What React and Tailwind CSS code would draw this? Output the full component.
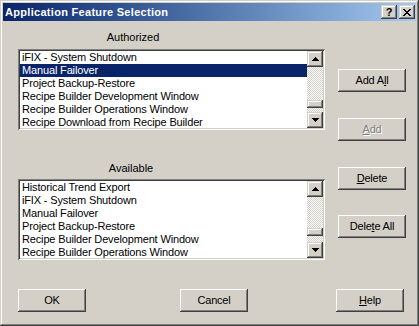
import React from "react";

const raised =
  "bg-[#d4d0c8] shadow-[inset_-1px_-1px_#404040,inset_1px_1px_#ffffff,inset_-2px_-2px_#808080,inset_2px_2px_#d4d0c8]";
const raisedSb =
  "bg-[#d4d0c8] shadow-[inset_-1px_-1px_#404040,inset_1px_1px_#d4d0c8,inset_-2px_-2px_#808080,inset_2px_2px_#ffffff]";

function Btn({ children, className = "", disabled }) {
  return (
    <div
      className={
        "w-[68px] h-[23px] flex items-center justify-center text-[11px] leading-[13px] tracking-[-0.2px] " +
        raised +
        " " +
        (disabled ? "text-[#808080] [text-shadow:1px_1px_0_#ffffff]" : "text-black") +
        " " +
        className
      }
    >
      <span>{children}</span>
    </div>
  );
}

function Arrow({ up }) {
  return (
    <svg width="7" height="4" viewBox="0 0 7 4" shapeRendering="crispEdges">
      {up ? (
        <path d="M3 0h1v1h1v1h1v1h1v1H0V3h1V2h1V1h1z" fill="#000" />
      ) : (
        <path d="M0 0h7v1H6v1H5v1H4v1H3V3H2V2H1V1H0z" fill="#000" />
      )}
    </svg>
  );
}

function ScrollBtn({ up }) {
  return (
    <div className={"w-4 h-4 flex items-center justify-center " + raisedSb}>
      <Arrow up={up} />
    </div>
  );
}

function ListBox({ items, selected, thumbTop, className = "" }) {
  return (
    <div
      className={
        "w-[307px] h-[81px] bg-white p-[2px] flex shadow-[inset_1px_1px_#808080,inset_-1px_-1px_#ffffff,inset_2px_2px_#404040,inset_-2px_-2px_#d4d0c8] " +
        className
      }
    >
      <div className="flex-1 flex flex-col overflow-hidden">
        {items.map((it, i) => (
          <div
            key={i}
            className={
              "h-[13px] shrink-0 leading-[13px] text-[11px] pl-[2px] whitespace-nowrap tracking-[-0.15px] " +
              (i === selected ? "bg-[#0a246a] text-white" : "text-black")
            }
          >
            {it}
          </div>
        ))}
      </div>
      <div className="w-4 flex flex-col">
        <ScrollBtn up />
        <div className="flex-1 flex flex-col bg-[image:repeating-conic-gradient(#ffffff_0_25%,#d4d0c8_0_50%)] bg-[length:2px_2px]">
          <div className={"w-4 h-[8px] " + raisedSb} style={{ marginTop: thumbTop }} />
        </div>
        <ScrollBtn />
      </div>
    </div>
  );
}

function TitleBtn({ children, className = "" }) {
  return (
    <div className={"w-4 h-[14px] flex items-center justify-center " + raisedSb + " " + className}>
      {children}
    </div>
  );
}

export default function App() {
  return (
    <div className="w-[419px] h-[326px] bg-[#d4d0c8] p-[3px] flex flex-col font-['Liberation_Sans',Arial,sans-serif] shadow-[inset_-1px_-1px_#404040,inset_1px_1px_#d4d0c8,inset_-2px_-2px_#808080,inset_2px_2px_#ffffff]">
      <div className="h-[18px] shrink-0 bg-linear-to-r from-[#0a246a] to-[#a6caf0] flex items-center pl-[2px] pr-[1px]">
        <span className="flex-1 text-white font-bold text-[11px] tracking-[0.3px] leading-[13px] whitespace-nowrap">
          Application Feature Selection
        </span>
        <TitleBtn>
          <span className="text-black font-bold text-[11px] leading-[11px] mt-[1px]">?</span>
        </TitleBtn>
        <TitleBtn className="ml-[2px]">
          <svg width="8" height="7" viewBox="0 0 8 7" shapeRendering="crispEdges">
            <path
              d="M0 0h2v1H0zM6 0h2v1H6zM1 1h2v1H1zM5 1h2v1H5zM2 2h4v1H2zM3 3h2v1H3zM2 4h4v1H2zM1 5h2v1H1zM5 5h2v1H5zM0 6h2v1H0zM6 6h2v1H6z"
              fill="#000"
            />
          </svg>
        </TitleBtn>
      </div>
      <div className="flex flex-col flex-1">
        <div className="flex">
          <div className="ml-[15px] w-[307px] flex flex-col">
            <div className="mt-[10px] h-[13px] leading-[13px] w-[230px] text-center text-[11px] text-black">
              Authorized
            </div>
            <ListBox
              className="mt-[5px]"
              selected={1}
              thumbTop={33}
              items={[
                "iFIX - System Shutdown",
                "Manual Failover",
                "Project Backup-Restore",
                "Recipe Builder Development Window",
                "Recipe Builder Operations Window",
                "Recipe Download from Recipe Builder",
              ]}
            />
            <div className="mt-[32px] h-[13px] leading-[13px] w-[226px] text-center text-[11px] text-black">
              Available
            </div>
            <ListBox
              className="mt-[4px]"
              selected={-1}
              thumbTop={31}
              items={[
                "Historical Trend Export",
                "iFIX - System Shutdown",
                "Manual Failover",
                "Project Backup-Restore",
                "Recipe Builder Development Window",
                "Recipe Builder Operations Window",
              ]}
            />
          </div>
          <div className="ml-[13px] flex flex-col">
            <Btn className="mt-[48px]">
              Add A<span className="underline">l</span>l
            </Btn>
            <Btn className="mt-[26px]" disabled>
              <span className="underline">A</span>dd
            </Btn>
            <Btn className="mt-[26px]">
              <span className="underline">D</span>elete
            </Btn>
            <Btn className="mt-[25px]">
              Dele<span className="underline">t</span>e All
            </Btn>
          </div>
        </div>
        <div className="flex mt-[29px] pl-[15px]">
          <Btn>OK</Btn>
          <Btn className="ml-[94px]">Cancel</Btn>
          <Btn className="ml-[88px]">
            <span className="underline">H</span>elp
          </Btn>
        </div>
      </div>
    </div>
  );
}
